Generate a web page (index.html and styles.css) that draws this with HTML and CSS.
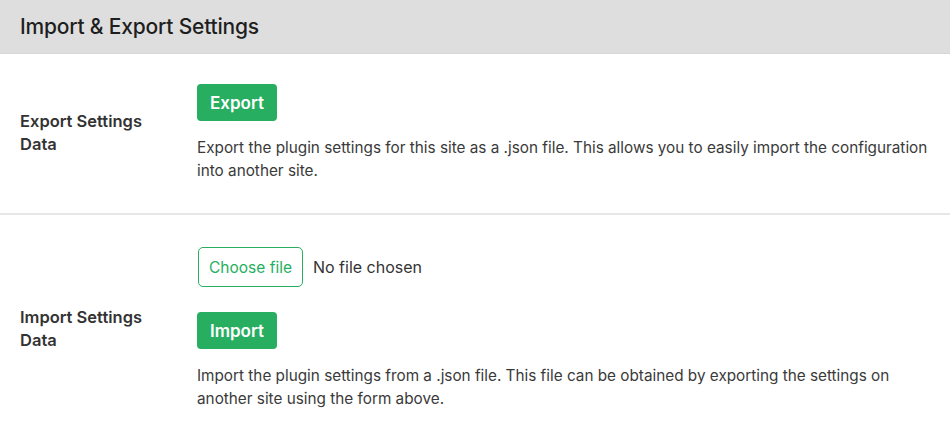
FILE: index.html
```html
<!DOCTYPE html>
<html>
<head>
<meta charset="utf-8">
<link rel="stylesheet" href="styles.css">
</head>
<body>
<div class="panel">
  <div class="panel-header"><h2>Import &amp; Export Settings</h2></div>
  <div class="row">
    <div class="label">Export Settings Data</div>
    <div class="field">
      <button class="btn">Export</button>
      <p class="desc">Export the plugin settings for this site as a .json file. This allows you to easily import the configuration into another site.</p>
    </div>
  </div>
  <div class="row row-last">
    <div class="label">Import Settings Data</div>
    <div class="field">
      <div class="file">
        <span class="file-btn">Choose file</span>
        <span class="file-name">No file chosen</span>
      </div>
      <button class="btn">Import</button>
      <p class="desc">Import the plugin settings from a .json file. This file can be obtained by exporting the settings on another site using the form above.</p>
    </div>
  </div>
</div>
</body>
</html>
```
FILE: styles.css
```css
* { box-sizing: border-box; }
html, body { margin: 0; padding: 0; background: #fff; }
body {
  font-family: Inter, "Noto Sans", sans-serif;
  color: #3a3a3a;
  font-size: 15px;
}
.panel { width: 950px; }
.panel-header {
  height: 54px;
  background: #dedede;
  border-bottom: 1px solid #d6d6d6;
  display: flex;
  align-items: center;
  padding: 0 20px;
}
.panel-header h2 {
  margin: 0;
  font-size: 21px;
  font-weight: 500;
  color: #1e1e1e;
  letter-spacing: -0.2px;
}
.row {
  display: grid;
  grid-template-columns: 177px 1fr;
  align-items: center;
  padding: 30px 20px 31px 20px;
  border-bottom: 2px solid #e6e6e6;
}
.row-last { border-bottom: none; padding-top: 32px; }
.label {
  font-size: 16.5px;
  font-weight: 600;
  line-height: 23px;
  color: #333;
  max-width: 140px;
}
.field { display: flex; flex-direction: column; align-items: flex-start; }
.btn {
  font-family: inherit;
  background: #27ae60;
  color: #fff;
  border: none;
  border-radius: 4px;
  font-size: 17px;
  font-weight: 600;
  height: 37px;
  padding: 0 13px;
  cursor: pointer;
}
.desc {
  margin: 15px 0 0;
  line-height: 23px;
  font-size: 15.3px;
  color: #3a3a3a;
}
.file { display: flex; align-items: center; gap: 10px; margin-bottom: 25px; margin-left: 1px; }
.file-btn {
  display: inline-flex;
  align-items: center;
  height: 40px;
  padding: 0 10px;
  border: 1px solid #27ae60;
  border-radius: 5px;
  color: #27ae60;
  font-size: 15.5px;
}
.file-name { font-size: 16px; color: #333; }
```
